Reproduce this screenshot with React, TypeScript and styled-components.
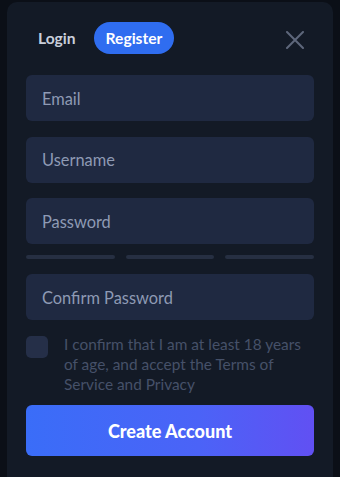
import React from "react";
import styled, { createGlobalStyle } from "styled-components";

const Global = createGlobalStyle`
  html, body { margin: 0; padding: 0; background: #0b0f17; }
  body { font-family: Lato, "Open Sans", sans-serif; }
  * { box-sizing: border-box; }
`;

const Card = styled.div`
  margin: 2px 7px 0;
  height: 490px;
  background: #131a26;
  border-radius: 10px;
  padding: 20px 19px 0;
  display: flex;
  flex-direction: column;
`;

const Header = styled.div`
  display: flex;
  align-items: center;
  height: 32px;
  margin-bottom: 21px;
`;

const Tabs = styled.div`
  display: flex;
  gap: 6px;
  flex: 1;
`;

const Tab = styled.button<{ $active?: boolean }>`
  border: 0;
  height: 32px;
  padding: 0 12px;
  border-radius: 16px;
  font-family: inherit;
  font-size: 15.6px;
  font-weight: 700;
  color: ${(p) => (p.$active ? "#ffffff" : "#c9cfdb")};
  background: ${(p) => (p.$active ? "#2f6df0" : "transparent")};
`;

const Close = styled.button`
  border: 0;
  background: transparent;
  padding: 0;
  width: 18px;
  height: 18px;
  margin-right: 10px;
  margin-top: 4px;
  display: flex;
`;

const Field = styled.input`
  width: 100%;
  height: 46px;
  border: 0;
  border-radius: 6px;
  background: #1f2941;
  padding: 0 16px;
  font-family: inherit;
  font-size: 16.4px;
  color: #fff;
  outline: none;
  &::placeholder { color: #8e9ab4; }
`;

const Stack = styled.div<{ $gap: number }>`
  display: flex;
  flex-direction: column;
  gap: ${(p) => p.$gap}px;
`;

const Bars = styled.div`
  display: grid;
  grid-template-columns: repeat(3, 1fr);
  gap: 11px;
  margin: -5px 0 0;
`;

const Bar = styled.div`
  height: 4px;
  border-radius: 2px;
  background: #262f42;
`;

const Check = styled.label`
  display: flex;
  gap: 16px;
  margin-top: 16px;
  cursor: pointer;
`;

const Box = styled.span`
  flex: none;
  width: 22px;
  height: 22px;
  border-radius: 5px;
  background: #252f48;
`;

const CheckText = styled.p`
  margin: -2px 0 0;
  font-size: 15.4px;
  line-height: 20px;
  color: #465169;
  width: 240px;
`;

const Submit = styled.button`
  margin-top: 11px;
  height: 51px;
  border: 0;
  border-radius: 6px;
  background: linear-gradient(90deg, #3a6df8 0%, #4b63f7 60%, #6150f3 100%);
  color: #fff;
  font-family: inherit;
  font-size: 18px;
  font-weight: 900;
`;

export default function App() {
  return (
    <>
      <Global />
      <Card>
        <Header>
          <Tabs>
            <Tab>Login</Tab>
            <Tab $active>Register</Tab>
          </Tabs>
          <Close aria-label="Close">
            <svg width="18" height="18" viewBox="0 0 18 18">
              <path d="M1 1 L17 17 M17 1 L1 17" stroke="#5e677b" strokeWidth="2" strokeLinecap="round" />
            </svg>
          </Close>
        </Header>
        <Stack $gap={15.5}>
          <Field placeholder="Email" />
          <Field placeholder="Username" />
          <Field placeholder="Password" type="password" />
          <Bars>
            <Bar />
            <Bar />
            <Bar />
          </Bars>
          <Field placeholder="Confirm Password" type="password" />
        </Stack>
        <Check>
          <Box />
          <CheckText>
            I confirm that I am at least 18 years
            <br />
            of age, and accept the Terms of
            <br />
            Service and Privacy
          </CheckText>
        </Check>
        <Submit>Create Account</Submit>
      </Card>
    </>
  );
}
